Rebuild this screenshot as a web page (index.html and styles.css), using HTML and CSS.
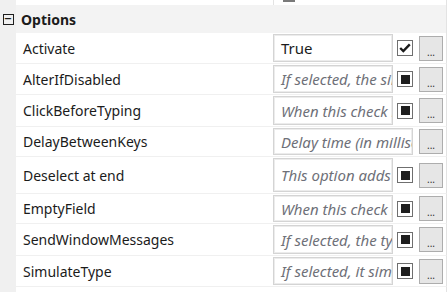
FILE: index.html
```html
<!DOCTYPE html>
<html>
<head>
    <title>Options</title>
    <meta name="viewport" content="width=device-width, initial-scale=1.0">
    <link rel="stylesheet" href="styles.css">
</head>
<body>
    <div class="grid">
        <div class="row top">
            <div class="gutter"></div>
            <div class="label"></div>
            <div class="value"><span class="stub"></span></div>
        </div>
        <div class="row category">
            <div class="gutter"><span class="toggle">&minus;</span></div>
            <div class="cat-name">Options</div>
        </div>

        <div class="row">
            <div class="gutter"></div>
            <div class="label">Activate</div>
            <div class="value">
                <div class="box">True</div>
                <span class="check">
                    <svg width="12" height="10" viewBox="0 0 12 10"><path d="M1.2 5 L4.3 8 L10.8 1.3" fill="none" stroke="#1a1a1a" stroke-width="2.4"/></svg>
                </span>
                <button class="more">...</button>
            </div>
        </div>
        <div class="row">
            <div class="gutter"></div>
            <div class="label">AlterIfDisabled</div>
            <div class="value">
                <div class="box hint">If selected, the simulated typing</div>
                <span class="check"><i></i></span>
                <button class="more">...</button>
            </div>
        </div>
        <div class="row tall1">
            <div class="gutter"></div>
            <div class="label">ClickBeforeTyping</div>
            <div class="value">
                <div class="box hint">When this check box is selected</div>
                <span class="check"><i></i></span>
                <button class="more">...</button>
            </div>
        </div>
        <div class="row short">
            <div class="gutter"></div>
            <div class="label">DelayBetweenKeys</div>
            <div class="value">
                <div class="box hint">Delay time (in milliseconds)</div>
                <button class="more">...</button>
            </div>
        </div>
        <div class="row big">
            <div class="gutter"></div>
            <div class="label">Deselect at end</div>
            <div class="value">
                <div class="box hint">This option adds an End key</div>
                <span class="check"><i></i></span>
                <button class="more">...</button>
            </div>
        </div>
        <div class="row short">
            <div class="gutter"></div>
            <div class="label">EmptyField</div>
            <div class="value">
                <div class="box hint">When this check box is selected</div>
                <span class="check"><i></i></span>
                <button class="more">...</button>
            </div>
        </div>
        <div class="row tall1">
            <div class="gutter"></div>
            <div class="label">SendWindowMessages</div>
            <div class="value">
                <div class="box hint">If selected, the type into</div>
                <span class="check"><i></i></span>
                <button class="more">...</button>
            </div>
        </div>
        <div class="row">
            <div class="gutter"></div>
            <div class="label">SimulateType</div>
            <div class="value">
                <div class="box hint">If selected, it simulates the type</div>
                <span class="check"><i></i></span>
                <button class="more">...</button>
            </div>
        </div>
        <div class="row rest">
            <div class="gutter"></div>
            <div class="label"></div>
            <div class="value"></div>
        </div>
    </div>
</body>
</html>
```

FILE: styles.css
```css
body {
    font-family: "Noto Sans", "Open Sans", sans-serif;
    font-size: 14px;
    color: #1b1b1b;
    background-color: #ffffff;
    margin: 0;
    overflow: hidden;
}

.grid {
    width: 447px;
}

.row {
    display: flex;
    height: 31px;
}

.row.short {
    height: 30px;
}

.row.tall1 {
    height: 32px;
}

.row.big {
    height: 37px;
}

.row.top {
    height: 5px;
}

.row.rest {
    height: 10px;
}

.gutter {
    width: 16px;
    flex: none;
    background-color: #f0f0f0;
}

.label {
    width: 257px;
    flex: none;
    padding-left: 7px;
    box-sizing: border-box;
    display: flex;
    align-items: center;
    border-bottom: 1px solid #f0f0f0;
    white-space: nowrap;
}

.row.top .label,
.row.top .value {
    border-bottom: none;
}

.value {
    flex: 1;
    display: flex;
    align-items: center;
    padding-right: 3px;
    border-bottom: 1px solid #f0f0f0;
    border-right: 1px solid #e3e3e3;
    min-width: 0;
}

.row.top .value {
    border-left: 1px solid #e3e3e3;
    align-items: flex-start;
}

.stub {
    display: block;
    width: 12px;
    height: 2px;
    margin-left: 9px;
    background-color: #7a7a7a;
}

.category {
    height: 28px;
}

.category .gutter {
    display: flex;
    align-items: center;
    justify-content: center;
}

.toggle {
    width: 9px;
    height: 9px;
    border: 1px solid #1e1e1e;
    font-size: 10px;
    line-height: 8px;
    text-align: center;
    font-family: "DejaVu Sans", sans-serif;
    font-weight: bold;
}

.cat-name {
    flex: 1;
    background-color: #f3f3f3;
    font-weight: bold;
    padding-left: 5px;
    display: flex;
    align-items: center;
    border-right: 1px solid #e3e3e3;
}

.box {
    flex: 1;
    min-width: 0;
    align-self: stretch;
    margin: 1px 0 1px 0;
    border: 1px solid #d4d4d4;
    box-shadow: inset 0 0 0 1px #ececec;
    padding: 0 0 0 7px;
    display: flex;
    align-items: center;
    overflow: hidden;
    white-space: nowrap;
    font-size: 15px;
}

.box.hint {
    font-style: italic;
    color: #6e7078;
}

.check {
    width: 14px;
    height: 14px;
    flex: none;
    margin-left: 4px;
    border: 1px solid #6f6f6f;
    background-color: #ffffff;
    display: flex;
    align-items: center;
    justify-content: center;
}

.check i {
    display: block;
    width: 9px;
    height: 9px;
    background-color: #1e1e1e;
}

.more {
    width: 24px;
    height: 25px;
    flex: none;
    margin-left: 6px;
    padding: 0 0 3px 0;
    border: 1px solid #adadad;
    background-color: #e6e6e6;
    color: #333333;
    font-family: "Noto Sans", sans-serif;
    font-size: 10px;
    line-height: 10px;
    overflow: hidden;
    display: flex;
    align-items: flex-end;
    justify-content: center;
}
```
